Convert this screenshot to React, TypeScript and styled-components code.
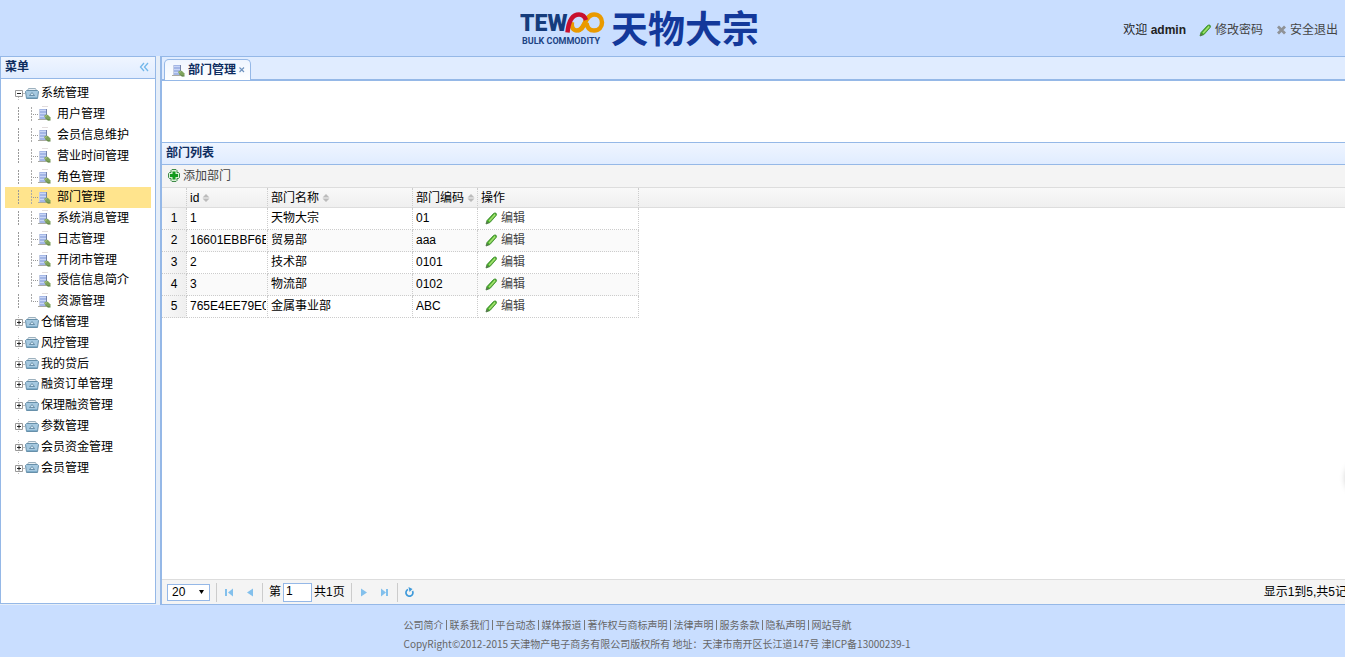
import React, { useState } from "react";
import styled, { createGlobalStyle, css } from "styled-components";

const line = "#95B8E7";

const GlobalStyle = createGlobalStyle`
  *, *::before, *::after { box-sizing: border-box; }
  body {
    margin: 0;
    font: 12px/20px "Liberation Sans", "Noto Sans CJK SC", sans-serif;
    color: #000;
    background: #fff;
  }
  button, input, select { font: inherit; color: inherit; }
  svg { display: block; flex: none; }
`;

const Page = styled.div`
  position: relative;
  display: flex;
  flex-direction: column;
  min-height: 100vh;
  overflow: hidden;
`;

/* ---------- header ---------- */

const Header = styled.header`
  display: grid;
  grid-template-columns: 9fr auto 10fr;
  align-items: center;
  height: 56px;
  padding-right: 7px;
  background: #c9deff;
`;

const Logo = styled.h1`
  grid-column: 2;
  margin: 0;
  line-height: 0;
`;

const UserBar = styled.div`
  display: flex;
  justify-content: flex-end;
  align-items: center;
  gap: 13px;
  padding-top: 3px;
  color: #222;
`;

const iconButton = css`
  display: inline-flex;
  align-items: center;
  padding: 0;
  border: 0;
  background: none;
  color: #444;
  text-decoration: none;
  white-space: nowrap;
  cursor: pointer;
`;

const ActionLink = styled.a`
  ${iconButton}
  gap: 3px;
`;

const ActionButton = styled.button`
  ${iconButton}
  gap: 3px;
`;

/* ---------- body ---------- */

const Middle = styled.div`
  display: flex;
  flex: 1;
  gap: 4px;
  background: #e6eef8;
`;

const Sidebar = styled.nav`
  display: flex;
  flex-direction: column;
  width: 156px;
  flex: none;
  margin-bottom: 1px;
  border: 1px solid ${line};
  background: #fff;
`;

const PanelTitle = styled.div`
  display: flex;
  align-items: center;
  justify-content: space-between;
  height: 22px;
  padding: 0 6px 1px 4px;
  border-bottom: 1px solid ${line};
  background: linear-gradient(#eff5ff, #e0ecff);
  color: #0e2d5f;
`;

const Title = styled.h2`
  margin: 0;
  font-size: 12px;
  line-height: 20px;
`;

const CollapseButton = styled.button`
  ${iconButton}
`;

const Tree = styled.ul`
  display: grid;
  grid-auto-rows: 1fr;
  min-height: 395px;
  margin: 4px;
  padding: 0;
  list-style: none;
`;

const TreeItem = styled.li<{ $selected?: boolean }>`
  display: flex;
  padding-left: 7px;
  background: ${(p) => (p.$selected ? "#ffe48d" : "transparent")};
`;

const TreeLink = styled.a<{ $child?: boolean }>`
  display: flex;
  flex: 1;
  align-items: center;
  gap: ${(p) => (p.$child ? 6 : 2)}px;
  color: #000;
  text-decoration: none;
  white-space: nowrap;
`;

const TreeMark = styled.span`
  display: flex;
  align-items: center;
`;

const Main = styled.main`
  flex: 1;
  min-width: 0;
  display: flex;
  overflow: hidden;
  border: solid ${line};
  border-width: 1px 0 1px 2px;
  background: #fff;
`;

const Workspace = styled.div`
  display: flex;
  flex-direction: column;
  flex: none;
  width: calc(100% + 21px);
`;

const TabStrip = styled.div`
  display: flex;
  align-items: flex-end;
  height: 23px;
  padding-left: 2px;
  border-bottom: 1px solid ${line};
  background: #e0ecff;
`;

const Tab = styled.div`
  display: flex;
  align-items: center;
  height: 21px;
  margin-bottom: -1px;
  padding: 0 5px 0 7px;
  border: 1px solid ${line};
  border-bottom: 0;
  border-radius: 5px 5px 0 0;
  background: linear-gradient(#eff5ff, #fff);
  color: #0e2d5f;
  font-weight: bold;
`;

const TabLabel = styled.button`
  ${iconButton}
  gap: 3px;
  color: #0e2d5f;
`;

const TabClose = styled.button`
  ${iconButton}
  margin-left: 3px;
`;

const SearchArea = styled.div`
  height: 63px;
  border: solid ${line};
  border-width: 1px 0;
`;

const Toolbar = styled.div`
  display: flex;
  align-items: center;
  height: 23px;
  padding: 0 6px 1px;
  border-bottom: 1px solid #ddd;
  background: #f4f4f4;
`;

const Grid = styled.table`
  width: 100%;
  table-layout: fixed;
  border-spacing: 0;
`;

const HeadCell = styled.th<{ $blank?: boolean }>`
  height: 20px;
  padding: 0 0 0 3px;
  border-bottom: 1px solid #ddd;
  border-right: ${(p) => (p.$blank ? "0" : "1px dotted #ccc")};
  background: linear-gradient(#f9f9f9, #efefef);
  font-weight: normal;
  line-height: 18px;
  text-align: left;
  white-space: nowrap;
`;

const SortButton = styled.button`
  ${iconButton}
  gap: 3px;
  color: #000;
  line-height: 18px;
  vertical-align: top;
`;

const Row = styled.tr`
  background: #fff;
  &:nth-child(even) { background: #fafafa; }
`;

const Cell = styled.td`
  height: 22px;
  padding: 0 1px 1px 3px;
  border: dotted #ccc;
  border-width: 0 1px 1px 0;
  white-space: nowrap;
`;

const CellText = styled.div`
  overflow: hidden;
`;

const NumberCell = styled(Cell)`
  padding: 0 0 1px;
  background: linear-gradient(to right, #f9f9f9, #efefef);
  text-align: center;
`;

const ActionCell = styled(Cell)`
  padding-left: 7px;
  & > button { vertical-align: top; }
`;

const BlankCell = styled.td`
  background: #fff;
`;

const Pager = styled.div`
  display: flex;
  align-items: center;
  height: 25px;
  margin-top: auto;
  padding: 0 7px 0 5px;
  border-top: 1px solid #ddd;
  background: #f4f4f4;
`;

const SelectBox = styled.span`
  position: relative;
  & > svg { position: absolute; right: 6px; top: 6px; pointer-events: none; }
`;

const PageSize = styled.select`
  display: block;
  width: 43px;
  height: 17px;
  padding: 0 4px;
  appearance: none;
  border: 1px solid ${line};
  border-radius: 0;
  background: #fff;
  line-height: 15px;
`;

const Divider = styled.span`
  width: 1px;
  height: 19px;
  margin: 0 6px;
  background: #ccc;
`;

const PageButton = styled.button`
  ${iconButton}
  justify-content: center;
  width: 12px;
  height: 16px;
`;

const PageGroup = styled.span`
  display: flex;
  align-items: center;
  gap: 9px;
`;

const PageLabel = styled.label`
  display: flex;
  align-items: center;
  gap: 2px;
`;

const PageInput = styled.input`
  width: 29px;
  height: 19px;
  padding: 0 2px 2px;
  border: 1px solid ${line};
`;

const Status = styled.span`
  margin-left: auto;
  white-space: nowrap;
`;

/* ---------- footer ---------- */

const Footer = styled.footer`
  height: 52px;
  padding: 10px 0 0 30%;
  background: #c9deff;
  color: #666;
  font: 10px/19px "Noto Sans CJK SC", sans-serif;
  white-space: nowrap;
`;

const FooterLinks = styled.div`
  display: flex;
  align-items: center;
`;

const FooterLink = styled.a`
  color: inherit;
  text-decoration: none;
  & + &::before {
    content: "";
    display: inline-block;
    width: 1px;
    height: 10px;
    margin: 0 3px 0 2px;
    background: #777;
    vertical-align: -1px;
  }
`;

const Copyright = styled.p`
  margin: 0;
`;

const SideBubble = styled.div`
  position: absolute;
  right: -37px;
  top: 460px;
  width: 36px;
  height: 36px;
  border-radius: 50%;
  background: #fff;
  box-shadow: 0 0 6px rgba(0, 0, 0, 0.25);
`;

/* ---------- drawings ---------- */

const LogoMark = () => (
  <svg width="240" height="54" viewBox="0 0 240 54" role="img" aria-label="TEWOO 天物大宗">
    <text x="0" y="30" fill="#153c7c" fontFamily="Roboto, sans-serif" fontWeight="900" fontSize="23">TEW</text>
    <g fill="none" strokeWidth="4.500">
      <path d="M66 19 C64 26 61 29.500 57 29.500 C53 29.500 51 26 52 21" stroke="#e99a00" />
      <path d="M58 29.500 C65 28 65 13.500 74 13.500 C79 13.500 82 17 82 21.500 C82 26 79 29.500 74 29.500 C69 29.500 67 26 66.500 22" stroke="#e99a00" />
      <path d="M47.500 31.500 C48.500 21 52 13.500 59 13.500 C63 13.500 65 16 66 19" stroke="#c8102e" />
    </g>
    <text x="2" y="43" fill="#1c4384" fontFamily="Roboto, sans-serif" fontWeight="700" fontSize="9">BULK COMMODITY</text>
    <text x="91" y="42" fill="#13389a" fontFamily="'Noto Sans CJK SC', sans-serif" fontWeight="700" fontSize="37">天物大宗</text>
  </svg>
);

const PencilIcon = () => (
  <svg width="13" height="14" viewBox="0 0 13 14">
    <path d="M1 13 L2 9.500 L8.500 2.500 Q10 1.500 11 2.200 Q12 3 11.200 4.500 L5 11.500 Z" fill="#43a928" stroke="#3c8a2c" strokeWidth="0.800" />
    <path d="M4 10.200 L10.200 3.400" stroke="#a5e070" strokeWidth="1.600" />
    <path d="M1 13 L1.800 10.500 L3.500 12 Z" fill="#666" />
  </svg>
);

const CrossIcon = () => (
  <svg width="11" height="10" viewBox="0 0 11 10">
    <path d="M2 1.500 L9 8.500 M9 1.500 L2 8.500" stroke="#8f9296" strokeWidth="2.800" />
  </svg>
);

const AddIcon = () => (
  <svg width="12" height="13" viewBox="0 0 12 13">
    <path d="M4 .5 H8 L9 1.500 V3.500 H10.500 L11.500 4.500 V8.500 L10.500 9.500 H9 V11.500 L8 12.500 H4 L3 11.500 V9.500 H1.500 L.5 8.500 V4.500 L1.500 3.500 H3 V1.500 Z" fill="#d9f0d6" stroke="#3f8a48" />
    <path d="M6 2.500 V10.500 M2 6.500 H10" stroke="#139a1e" strokeWidth="3" />
  </svg>
);

const DocIcon = ({ scar }: { scar?: boolean }) => (
  <svg width="13" height="20" viewBox="0 0 13 20">
    {scar && <path d="M4 2.500 H10" stroke="#e2dcdc" />}
    <path d="M2 5 H8 V15 H2 Z" fill="#a3b6e6" />
    <path d="M2 6.500 H8 M2 9.500 H8 M2 12.500 H7" stroke="#c9d6f6" />
    <path d="M8.500 5 V13" stroke="#7382a8" />
    <path d="M1.500 5 V15" stroke="#c4cde4" />
    <path d="M0 15.500 H8" stroke="#a9a9a2" />
    <path d="M6 12 Q8 9.500 10 11 L12.500 13.500 V15.500 Q10 17 8 15 Z" fill="#7fa35c" />
    <path d="M8 14.500 L9.500 16 H12.500" fill="none" stroke="#557a3c" />
    <path d="M7 12.500 L9 11.500" stroke="#a5c283" />
  </svg>
);

const FolderIcon = () => (
  <svg width="14" height="13" viewBox="0 0 14 13">
    <path d="M2.500 3.500 L3.500 1.500 H10.500 L11.500 3.500" fill="#e8eff4" stroke="#9db1be" />
    <path d="M.5 4.500 L1.500 3.500 H12.500 L13.500 4.500 L12.500 11.500 H1.500 Z" fill="#a6c9e0" stroke="#6790aa" />
    <path d="M2 10.500 H12" stroke="#7fadca" />
    <path d="M7 5.500 L9.500 8.500 H4.500 Z" fill="#d7e9f4" stroke="#557f9a" strokeWidth="0.800" />
  </svg>
);

const Expander = ({ open }: { open?: boolean }) => (
  <svg width="13" height="14" viewBox="0 0 13 14">
    <path d={open ? "M6.500 11 V14" : "M6.500 0 V14"} stroke="#bbb" strokeDasharray="1 1" />
    <path d="M11 7.500 H13" stroke="#bbb" />
    <path d="M3.500 4.500 H10.500 V10.500 H3.500 Z" fill="#fff" stroke="#999" />
    <path d={open ? "M5 7.500 H9" : "M5 7.500 H9 M7 5.500 V9.500"} stroke="#222" />
  </svg>
);

const Branch = ({ last }: { last?: boolean }) => (
  <svg width="26" height="14" viewBox="0 0 26 14" fill="none" stroke="#999">
    <path d="M6.500 0 V14" strokeDasharray="2 1" />
    <path d={last ? "M19.500 0 V8" : "M19.500 0 V14"} strokeDasharray="2 1" stroke="#aaa" />
    <path d="M21 7.500 H26" strokeDasharray="1 1" />
  </svg>
);

const SortIcon = () => (
  <svg width="8" height="10" viewBox="0 0 8 10" fill="#bbb">
    <path d="M4 1 L7.500 4.500 H.5 Z M4 9 L.5 5.500 H7.500 Z" />
  </svg>
);

const CollapseIcon = () => (
  <svg width="10" height="10" viewBox="0 0 10 10" fill="none" stroke="#72b7ea" strokeWidth="1.300">
    <path d="M5 1 L1.500 5 L5 9 M9 1 L5.500 5 L9 9" />
  </svg>
);

const CloseIcon = () => (
  <svg width="6" height="6" viewBox="0 0 6 6">
    <path d="M.5 .5 L5 5 M5 .5 L.5 5" stroke="#6f93bf" strokeWidth="1.200" />
  </svg>
);

const ArrowIcon = ({ back, edge }: { back?: boolean; edge?: boolean }) => (
  <svg width="8" height="9" viewBox="0 0 8 9" fill="#83c0ec">
    {back ? <path d={edge ? "M8 .5 V8.500 L3 4.500 Z" : "M7 .5 V8.500 L1 4.500 Z"} /> : <path d={edge ? "M0 .5 V8.500 L5 4.500 Z" : "M1 .5 V8.500 L7 4.500 Z"} />}
    {edge && <rect x={back ? 0 : 5} y="1" width="2" height="7" />}
  </svg>
);

const RefreshIcon = () => (
  <svg width="11" height="11" viewBox="0 0 11 11">
    <path d="M4 2.500 A3.500 3.500 0 1 0 8.500 4" fill="none" stroke="#3f9ada" strokeWidth="1.700" />
    <path d="M4.500 0 L8.500 2 L5.500 5 Z" fill="#3f9ada" />
  </svg>
);

/* ---------- data ---------- */

const children = ["用户管理", "会员信息维护", "营业时间管理", "角色管理", "部门管理", "系统消息管理", "日志管理", "开闭市管理", "授信信息简介", "资源管理"];
const groups = ["仓储管理", "风控管理", "我的贷后", "融资订单管理", "保理融资管理", "参数管理", "会员资金管理", "会员管理"];
const departments = [
  { id: "1", name: "天物大宗", code: "01" },
  { id: "16601EBBF6E", name: "贸易部", code: "aaa" },
  { id: "2", name: "技术部", code: "0101" },
  { id: "3", name: "物流部", code: "0102" },
  { id: "765E4EE79E0", name: "金属事业部", code: "ABC" },
];
const footerLinks = ["公司简介", "联系我们", "平台动态", "媒体报道", "著作权与商标声明", "法律声明", "服务条款", "隐私声明", "网站导航"];

const Group = ({ label, open }: { label: string; open?: boolean }) => (
  <TreeItem>
    <TreeLink href="#">
      <TreeMark><Expander open={open} /><FolderIcon /></TreeMark>
      {label}
    </TreeLink>
  </TreeItem>
);

export default function App() {
  const [selected, setSelected] = useState("部门管理");
  const [page, setPage] = useState("1");

  return (
    <Page>
      <GlobalStyle />
      <Header>
        <Logo><LogoMark /></Logo>
        <UserBar>
          <span>欢迎 <b>admin</b></span>
          <ActionLink href="#"><PencilIcon />修改密码</ActionLink>
          <ActionLink href="#"><CrossIcon />安全退出</ActionLink>
        </UserBar>
      </Header>

      <Middle>
        <Sidebar aria-label="菜单">
          <PanelTitle>
            <Title>菜单</Title>
            <CollapseButton aria-label="收起"><CollapseIcon /></CollapseButton>
          </PanelTitle>
          <Tree>
            <Group label="系统管理" open />
            {children.map((label, i) => (
              <TreeItem key={label} $selected={label === selected}>
                <TreeLink href="#" $child onClick={() => setSelected(label)}>
                  <TreeMark><Branch last={i === children.length - 1} /><DocIcon scar /></TreeMark>
                  {label}
                </TreeLink>
              </TreeItem>
            ))}
            {groups.map((label) => <Group key={label} label={label} />)}
          </Tree>
        </Sidebar>

        <Main>
          <Workspace>
            <TabStrip>
              <Tab>
                <TabLabel><DocIcon />部门管理</TabLabel>
                <TabClose aria-label="关闭"><CloseIcon /></TabClose>
              </Tab>
            </TabStrip>
            <SearchArea />
            <PanelTitle><Title>部门列表</Title></PanelTitle>
            <Toolbar>
              <ActionButton><AddIcon />添加部门</ActionButton>
            </Toolbar>
            <Grid>
              <colgroup>
                <col width="25" /><col width="81" /><col width="145" /><col width="65" /><col width="161" /><col />
              </colgroup>
              <thead>
                <tr>
                  <HeadCell />
                  <HeadCell><SortButton>id<SortIcon /></SortButton></HeadCell>
                  <HeadCell><SortButton>部门名称<SortIcon /></SortButton></HeadCell>
                  <HeadCell><SortButton>部门编码<SortIcon /></SortButton></HeadCell>
                  <HeadCell>操作</HeadCell>
                  <HeadCell $blank />
                </tr>
              </thead>
              <tbody>
                {departments.map((d, i) => (
                  <Row key={d.id}>
                    <NumberCell>{i + 1}</NumberCell>
                    <Cell><CellText>{d.id}</CellText></Cell>
                    <Cell><CellText>{d.name}</CellText></Cell>
                    <Cell><CellText>{d.code}</CellText></Cell>
                    <ActionCell><ActionButton><PencilIcon />编辑</ActionButton></ActionCell>
                    <BlankCell />
                  </Row>
                ))}
              </tbody>
            </Grid>
            <Pager>
              <SelectBox>
                <PageSize aria-label="每页条数" defaultValue="20">
                  <option>10</option>
                  <option>20</option>
                  <option>50</option>
                </PageSize>
                <svg width="5" height="4" viewBox="0 0 5 4"><path d="M0 0 H5 L2.500 4 Z" /></svg>
              </SelectBox>
              <Divider />
              <PageGroup>
                <PageButton aria-label="首页"><ArrowIcon back edge /></PageButton>
                <PageButton aria-label="上一页"><ArrowIcon back /></PageButton>
              </PageGroup>
              <Divider />
              <PageLabel>
                第
                <PageInput value={page} onChange={(e) => setPage(e.target.value)} />
                共1页
              </PageLabel>
              <Divider />
              <PageGroup>
                <PageButton aria-label="下一页"><ArrowIcon /></PageButton>
                <PageButton aria-label="末页"><ArrowIcon edge /></PageButton>
              </PageGroup>
              <Divider />
              <PageButton aria-label="刷新"><RefreshIcon /></PageButton>
              <Status>显示1到5,共5记录</Status>
            </Pager>
          </Workspace>
        </Main>
      </Middle>

      <Footer>
        <FooterLinks>
          {footerLinks.map((label) => <FooterLink key={label} href="#">{label}</FooterLink>)}
        </FooterLinks>
        <Copyright>CopyRight©2012-2015 天津物产电子商务有限公司版权所有 地址：天津市南开区长江道147号 津ICP备13000239-1</Copyright>
      </Footer>
      <SideBubble />
    </Page>
  );
}
